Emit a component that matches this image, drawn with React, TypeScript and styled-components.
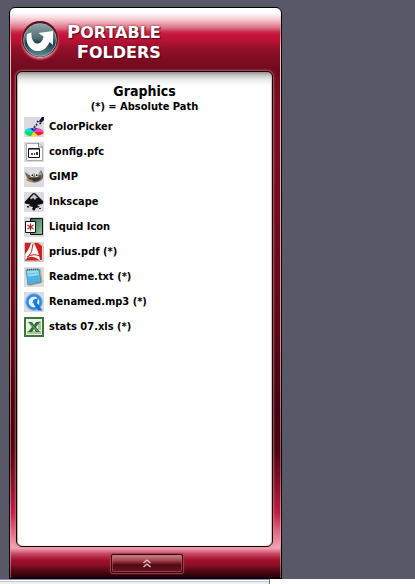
import React from "react";
import styled, { createGlobalStyle } from "styled-components";

const GlobalStyle = createGlobalStyle`
  * { box-sizing: border-box; }
  body {
    margin: 0;
    background: #595868;
    font-family: "DejaVu Sans Condensed", Tahoma, "DejaVu Sans", sans-serif;
    color: #000;
  }
`;

const Desktop = styled.div`
  min-height: 100vh;
  display: flex;
  flex-direction: column;
  padding-top: 7px;
`;

const Launcher = styled.main`
  flex: 1;
  width: calc(100% - 9px);
  max-width: 273px;
  margin-left: 9px;
  display: flex;
  flex-direction: column;
  border: 1px solid #000;
  border-radius: 6px 6px 0 0;
  padding: 0 8px 0 6px;
  background:
    linear-gradient(#fff0 0, #f6b9c4 40px, #d98a96 60%, #a04a55 80%, #f0a0b0 94%, #80404a 100%) left / 1px 100% no-repeat,
    linear-gradient(#fff0 0, #f6b9c4 40px, #d98a96 60%, #a04a55 80%, #f0a0b0 94%, #80404a 100%) right / 1px 100% no-repeat,
    linear-gradient(
      #fff 0, #fff 4px, #fae0e5 9px, #efb0bc 14px, #dc6f84 20px, #c9284a 24px, #c5143a 27px, #b91336 32px,
      #96102a 40px, #7d0c22 52px, #700a1f 62px, #7c0c23 100px, #6f0a20 240px,
      #5c0718 320px, #420410 400px, #4a0412 440px, #8f0f2b 480px, #c41c42 505px,
      #e46c88 525px, #f0a6b6 540px, #c84460 546px, #a3112f 552px, #8b0e27 557px,
      #4a0613 564px, #1d0106 570px
    );
`;

const Header = styled.header`
  height: 63px;
  display: flex;
  align-items: center;
  padding: 0 0 0 3px;
  gap: 6px;
`;

const LogoMark = styled.svg`
  width: 42px;
  height: 42px;
  flex: none;
`;

const Brand = styled.h1`
  margin: 5px 0 0;
  font: bold 16px/19px "DejaVu Sans", Verdana, sans-serif;
  color: #fff;
  text-align: right;
  text-shadow: 1px 1px 1px #5a0818, 0 0 2px #80102a;
  text-transform: uppercase;
  span { display: block; }
  span::first-letter { font-size: 18px; line-height: 19px; }
`;

const Panel = styled.section`
  flex: 1;
  border: 1px solid #100;
  border-radius: 6px;
  padding: 11px 7px 0;
  background: linear-gradient(#8b8b8b 0, #c3c3c3 3px, #ececec 8px, #fff 14px);
  box-shadow: 0 0 2px 1px #e98a9d99, inset 1px 0 1px #b8b0ae, inset -1px 0 1px #c8c0be;
`;

const Title = styled.h2`
  margin: 0;
  font-size: 14px;
  line-height: 17px;
  text-align: center;
`;

const Note = styled.p`
  margin: 0;
  font-size: 11px;
  line-height: 13px;
  font-weight: bold;
  text-align: center;
`;

const Items = styled.ul`
  list-style: none;
  margin: 4px 0 0;
  padding: 0;
  display: grid;
  gap: 5px;
`;

const Item = styled.button`
  display: flex;
  align-items: center;
  gap: 5px;
  width: 100%;
  height: 20px;
  padding: 0;
  border: 0;
  background: none;
  color: inherit;
  font: bold 11px/20px "DejaVu Sans Condensed", Tahoma, "DejaVu Sans", sans-serif;
  text-align: left;
  white-space: nowrap;
  cursor: pointer;
`;

const Icon = styled.svg`
  width: 20px;
  height: 20px;
  flex: none;
  background: #dcdbe2;
`;

const Footer = styled.footer`
  height: 31px;
  display: flex;
  justify-content: center;
  align-items: flex-start;
  padding: 7px 0 0 5px;
`;

const Collapse = styled.button`
  width: 72px;
  height: 19px;
  padding: 0;
  display: grid;
  place-items: center;
  border: 1px solid #35040e;
  border-radius: 2px;
  background: linear-gradient(#c9848b 0, #a44b56 5px, #7c1c29 8px, #4c0a14 10px, #65131f 16px);
  box-shadow: 0 0 1px 1px #a84050, inset 0 0 0 1px #c06c7880;
  cursor: pointer;
`;

const Taskbar = styled.div`
  height: 5px;
  background: #fff;
  &::before {
    content: "";
    display: block;
    width: 269px;
    max-width: 100%;
    height: 5px;
    border-top: 1px solid #8d8ca6;
    border-right: 1px solid #66658a;
    background: linear-gradient(#fff 0, #fff 1px, #c6c6d8 1px, #c6c6d8 2px, #eee 2px);
  }
`;

const icons: Record<string, React.ReactNode> = {
  picker: (
    <>
      <ellipse cx="10" cy="15" rx="9.6" ry="4.4" fill="#eee" />
      <path d="M10 15 0.5 15Q1 11.5 6 11Z" fill="#08d8e8" />
      <path d="M10 15 0.5 15Q1 18.5 7 19.2Z" fill="#10d860" />
      <path d="M10 15 7 19.2Q11 20 14 18.8Z" fill="#f4e020" />
      <path d="M10 15 14 18.8Q19.5 17.5 19.6 15Z" fill="#f02030" />
      <path d="M10 15 19.6 15Q19 12 14 11Z" fill="#f048b0" />
      <path d="M10 15 14 11 6 11Z" fill="#5038d8" />
      <path d="M8 13 10 9 15 4 17 6 11 11Z" fill="#fff" stroke="#889" strokeWidth=".6" />
      <path d="M8 13 14 6M13 4 17 7" stroke="#18184c" strokeWidth="1.4" strokeDasharray="2 1" />
      <path d="M15 4 18 0H20V3L17 6Z" fill="#101040" />
    </>
  ),
  config: (
    <>
      <path d="M2.5 1.5H15L18.5 5V18.5H2.5Z" fill="#fff" stroke="#aaa" />
      <path d="M14.5 1V5H18.5" fill="none" stroke="#777" />
      <path d="M4.5 6.5H15.5V15.5H4.5Z" fill="#fff" stroke="#111" />
      <path d="M5 7H15V8H5Z" fill="#7b7b91" />
      <path d="M7 11H9V13H7Z" fill="#c02840" />
      <path d="M10 11H11V13H10ZM12 10H14V13H12Z" fill="#203070" />
    </>
  ),
  gimp: (
    <>
      <path d="M1 5 5 8Q10 5 14 8L17 3 19 7Q20 12 16 14Q10 17 5 14Q3 11 1 6Z" fill="#6a6458" />
      <path d="M5 11Q10 12 17 10L15 13Q10 15 6 13Z" fill="#312d29" />
      <path d="M2 12 9 13 8 15 3 14Z" fill="#b68b45" />
      <circle cx="8" cy="8" r="2.1" fill="#eee" />
      <circle cx="12.5" cy="8" r="1.9" fill="#eee" />
      <circle cx="8.4" cy="8.2" r=".9" fill="#111" />
      <circle cx="12.7" cy="8.2" r=".9" fill="#111" />
      <path d="M14 8 17 4 18 8Z" fill="#a49d91" />
    </>
  ),
  inkscape: (
    <>
      <path d="M10 1Q11.5 1 13 3L19 9Q20.5 12 16 12.5L13 13 16 15 12 16 10 19 8 17 9 15 5 14 6 12.5 1 11.5Q0 10 2 8.5L7 3Q8.5 1 10 1Z" fill="#101010" />
      <path d="M10 2 14 6 12.5 6 11 8 9 6 7 7.5 6 6Z" fill="#c4c4ca" />
      <path d="M3 14H5V15.5H3ZM15 16H17V17H15Z" fill="#222" />
    </>
  ),
  liquid: (
    <>
      <defs>
        <linearGradient id="leaf" x1="0" y1="0" x2="1" y2="1">
          <stop stopColor="#2e6852" />
          <stop offset="1" stopColor="#9cc79b" />
        </linearGradient>
      </defs>
      <path d="M6.5 1.5H18.5V17.5H6.5Z" fill="url(#leaf)" stroke="#111" />
      <path d="M1.5 4.5H11.5V15.5H1.5Z" fill="#fff" stroke="#111" />
      <path d="M6.5 6.5V13.5M3.5 8 9.5 12M9.5 8 3.5 12" stroke="#a22722" strokeWidth="1.2" />
    </>
  ),
  pdf: (
    <>
      <path d="M1 1H15L19 4V19H1Z" fill="#fafafa" stroke="#999" strokeWidth=".6" />
      <path d="M10 1H14L18 4V18H16Q15 10 10 1Z" fill="#d3201c" />
      <path d="M1 1H7Q5 8 1 12ZM1 18.5H16Q11 14 6 15Q3 16 1 18Z" fill="#d3201c" />
      <path d="M9 2Q9 10 3 17M3 15Q9 11 16 14" fill="none" stroke="#bd2722" strokeWidth="1" />
    </>
  ),
  readme: (
    <>
      <path d="M4 3 17 2 18.5 16 6 19Z" fill="#c7b277" />
      <path d="M2 3 15 2 17 15 4 18Z" fill="#58b4e2" stroke="#397fae" strokeWidth=".7" />
      <path d="M3 4 14 3 15 8 4 10Z" fill="#9bdcf5" />
      <path d="M4 7 14 6M4 10 15 9M5 13 15 12M5 15 15 14" stroke="#4a9fd0" strokeWidth=".6" />
      <path d="M3 2.5H15" stroke="#3f5360" strokeWidth="1.5" strokeDasharray="1 1" />
    </>
  ),
  quicktime: (
    <>
      <circle cx="10" cy="10" r="8.4" fill="#2f8fe2" stroke="#8cbce6" />
      <circle cx="10" cy="10" r="4.8" fill="#dfeefa" stroke="#fff" strokeWidth="1" />
      <path d="M9 8 14 6 13 11 18.5 18.5H14L10 12.5Z" fill="#1d72cf" />
      <path d="M8 10.5 13 7 11 12Z" fill="#2381d8" />
    </>
  ),
  excel: (
    <>
      <path d="M1 1H19V19H1Z" fill="#eaf3e6" stroke="#3e773a" strokeWidth="2" />
      <path d="M3 14H17V17H3ZM14 4H17V13H14Z" fill="#a7c69b" />
      <path d="M4 5H8L10 8 12 5H16L12 10 16 15H12L10 12 8 15H4L8 10Z" fill="#2e6c31" />
      <path d="M5.5 6 13.5 14" stroke="#8db886" />
    </>
  ),
};

const entries = [
  ["picker", "ColorPicker"],
  ["config", "config.pfc"],
  ["gimp", "GIMP"],
  ["inkscape", "Inkscape"],
  ["liquid", "Liquid Icon"],
  ["pdf", "prius.pdf (*)"],
  ["readme", "Readme.txt (*)"],
  ["quicktime", "Renamed.mp3 (*)"],
  ["excel", "stats 07.xls (*)"],
];

export default function App() {
  return (
    <>
      <GlobalStyle />
      <Desktop>
        <Launcher>
          <Header>
            <LogoMark viewBox="0 0 42 42" aria-hidden="true">
              <defs>
                <linearGradient id="orb" x1="0" y1="0" x2="0" y2="1">
                  <stop stopColor="#8fa2a6" />
                  <stop offset=".45" stopColor="#4e6c73" />
                  <stop offset=".6" stopColor="#183e48" />
                  <stop offset="1" stopColor="#5d9099" />
                </linearGradient>
                <radialGradient id="halo">
                  <stop offset=".8" stopColor="#ffb3bf" />
                  <stop offset="1" stopColor="#d65b70" stopOpacity="0" />
                </radialGradient>
              </defs>
              <circle cx="21" cy="22" r="20" fill="url(#halo)" />
              <circle cx="21" cy="20" r="18" fill="#531522" />
              <circle cx="21" cy="21" r="16.4" fill="url(#orb)" stroke="#9fb0b4" strokeWidth=".8" />
              <path d="M12.5 13.5L8 15C6.5 22 9 29 15 31.5C22 33.5 28 30 30.5 23L34 26V12L19.5 14L24.5 17.5C24 22 21 25 17.5 24.5C13.5 23.5 12 18 12.5 13.5Z" fill="#fff" />
            </LogoMark>
            <Brand>
              <span>Portable</span>
              <span>Folders</span>
            </Brand>
          </Header>
          <Panel>
            <Title>Graphics</Title>
            <Note>(*) = Absolute Path</Note>
            <Items>
              {entries.map(([icon, label]) => (
                <li key={label}>
                  <Item type="button">
                    <Icon viewBox="0 0 20 20" aria-hidden="true">{icons[icon]}</Icon>
                    {label}
                  </Item>
                </li>
              ))}
            </Items>
          </Panel>
          <Footer>
            <Collapse type="button" aria-label="Collapse">
              <svg width="8" height="9" viewBox="0 0 8 9" fill="none" stroke="#f0c8cc" strokeWidth="1.3">
                <path d="M.5 4 4 1 7.5 4M.5 8 4 5 7.5 8" />
              </svg>
            </Collapse>
          </Footer>
        </Launcher>
        <Taskbar />
      </Desktop>
    </>
  );
}
